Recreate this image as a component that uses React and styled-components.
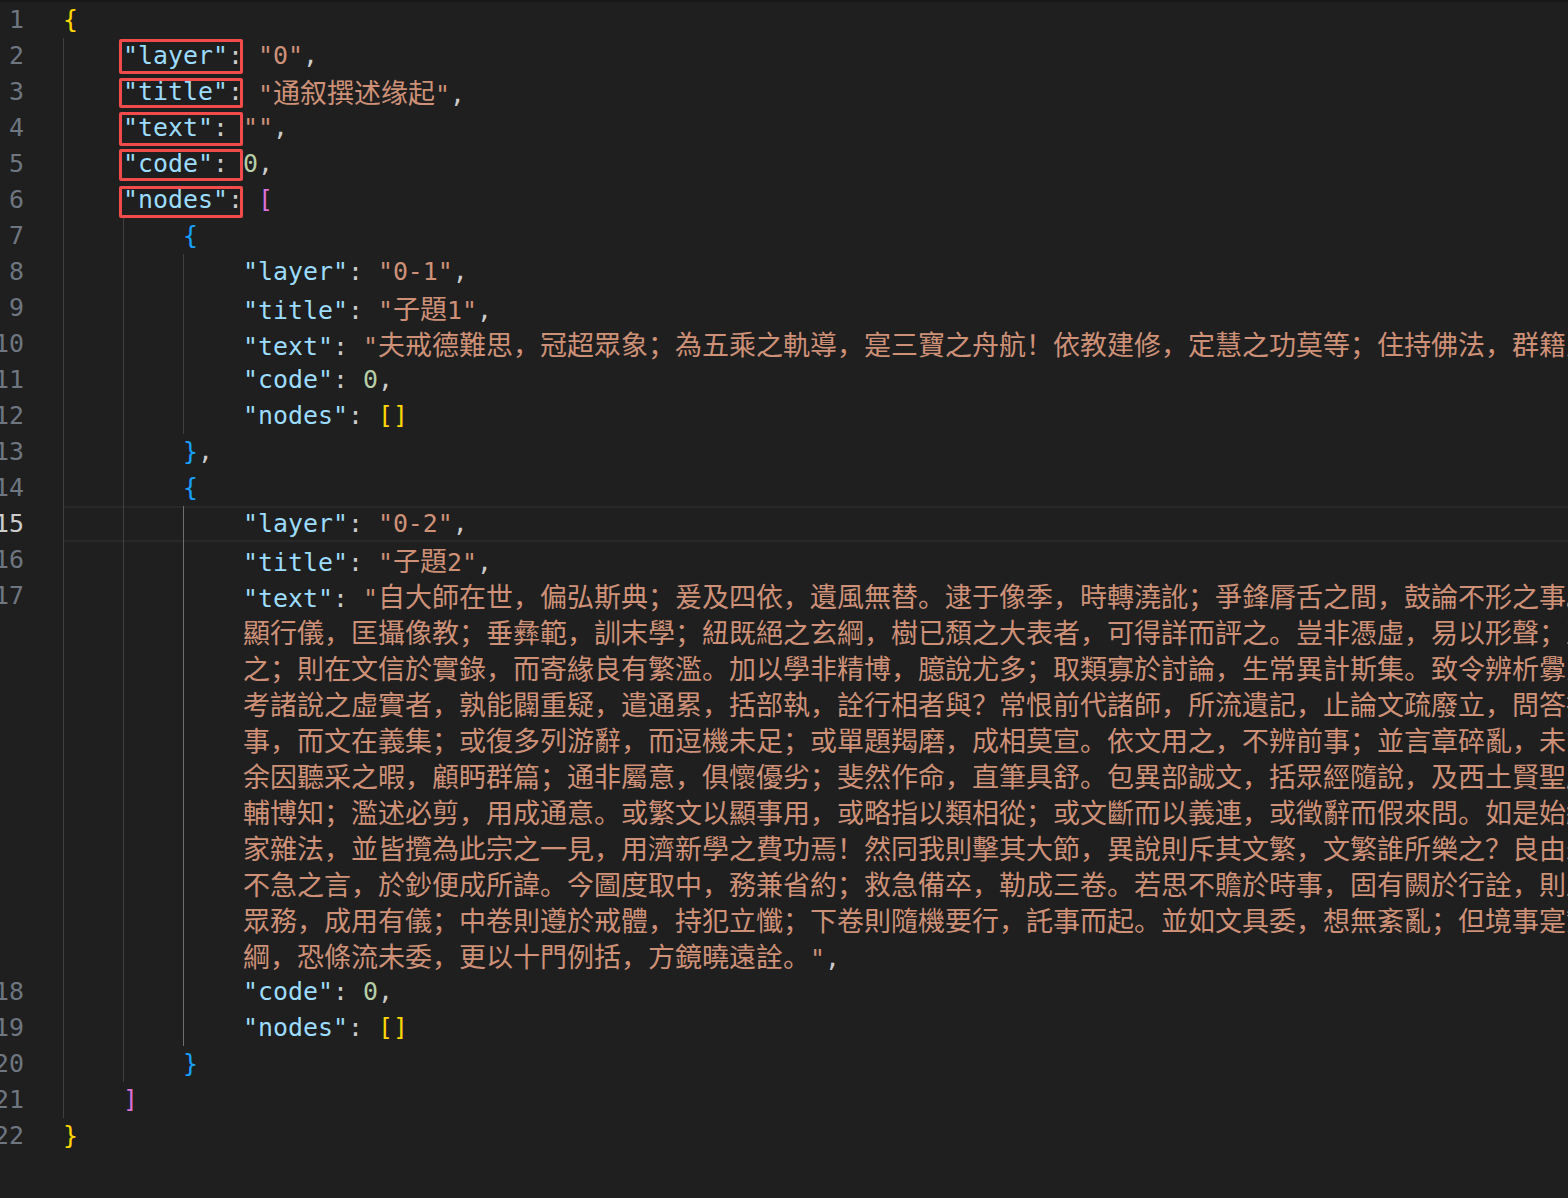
import React from "react";
import styled, { createGlobalStyle } from "styled-components";

const GlobalStyle = createGlobalStyle`
  html, body {
    margin: 0;
    padding: 0;
    background: #1f1f1f;
    overflow: hidden;
  }
`;

const MONO = `"DejaVu Sans Mono", "Liberation Mono", monospace`;

const Editor = styled.div`
  width: 1568px;
  height: 1198px;
  box-sizing: border-box;
  border-top: 2px solid #181818;
  background: #1f1f1f;
  overflow: hidden;
  font-family: ${MONO};
  font-size: 24.9px;
  line-height: 36px;
  color: #cccccc;
`;

const Row = styled.div`
  display: flex;
  height: 36px;
`;

const LineNo = styled.div`
  flex: none;
  width: 60px;
  margin-left: -36px;
  margin-right: 39px;
  text-align: right;
  white-space: pre;
  color: ${({ $current }) => ($current ? "#cccccc" : "#6e7681")};
`;

const Code = styled.div`
  flex: 1;
  position: relative;
  white-space: pre;
  overflow: hidden;
  box-shadow: ${({ $current }) =>
    $current ? "inset 0 2px #282828, inset 0 -2px #282828" : "none"};
`;

const Indent = styled.span`
  display: inline-block;
  box-sizing: border-box;
  width: 60px;
  height: 36px;
  vertical-align: top;
  border-left: 1px solid ${({ $active }) => ($active ? "#6e6e6e" : "#404040")};
`;

const Key = styled.span`
  color: #9cdcfe;
`;

const StrSpan = styled.span`
  color: #ce9178;
`;

const Num = styled.span`
  color: #b5cea8;
`;

const Punc = styled.span`
  color: #cccccc;
`;

const Bracket = styled.span`
  color: ${({ $c }) => $c};
`;

const Han = styled.span`
  font-family: "Noto Sans CJK SC", "Noto Sans CJK TC", sans-serif;
  font-size: 27px;
`;

const Mark = styled.span`
  position: relative;
  display: inline-block;
  height: 36px;
  vertical-align: top;
  &::after {
    content: "";
    position: absolute;
    left: -4px;
    width: 124px;
    top: ${({ $t }) => $t}px;
    bottom: ${({ $b }) => $b}px;
    border: 3px solid #f24b4b;
    border-radius: 2px;
    box-sizing: border-box;
    pointer-events: none;
  }
`;

const GOLD = "#ffd700";
const ORCHID = "#da70d6";
const BLUE = "#179fff";

const HAN = /([\u2E80-\u9FFF\uF900-\uFAFF\uFF00-\uFFEF\u3000-\u303F]+)/;

const withHan = (text) =>
  text.split(HAN).map((s, i) => (i % 2 ? <Han key={i}>{s}</Han> : s));

const Str = ({ children }) => <StrSpan>{withHan(children)}</StrSpan>;

// indent levels; active = level index that is highlighted
const Guides = ({ n, active }) =>
  Array.from({ length: n }, (_, i) => <Indent key={i} $active={i === active} />);

const Line = ({ n, indent = 0, active = -1, current, children }) => (
  <Row>
    <LineNo $current={current}>{n || ""}</LineNo>
    <Code $current={current}>
      <Guides n={indent} active={active} />
      {children}
    </Code>
  </Row>
);

const wrapped = [
  "顯行儀，匡攝像教；垂彝範，訓末學；紐既絕之玄綱，樹已頹之大表者，可得詳而評之。豈非憑虛，易以形聲；至",
  "之；則在文信於實錄，而寄緣良有繁濫。加以學非精博，臆說尤多；取類寡於討論，生常異計斯集。致令辨析釁累",
  "考諸說之虛實者，孰能闢重疑，遣通累，括部執，詮行相者與？常恨前代諸師，所流遺記，止論文疏廢立，問答抄",
  "事，而文在義集；或復多列游辭，而逗機未足；或單題羯磨，成相莫宣。依文用之，不辨前事；並言章碎亂，未能",
  "余因聽采之暇，顧眄群篇；通非屬意，俱懷優劣；斐然作命，直筆具舒。包異部誠文，括眾經隨說，及西土賢聖所",
  "輔博知；濫述必剪，用成通意。或繁文以顯事用，或略指以類相從；或文斷而以義連，或徵辭而假來問。如是始終",
  "家雜法，並皆攬為此宗之一見，用濟新學之費功焉！然同我則擊其大節，異說則斥其文繁，文繁誰所樂之？良由未",
  "不急之言，於鈔便成所諱。今圖度取中，務兼省約；救急備卒，勒成三卷。若思不贍於時事，固有闕於行詮，則上",
  "眾務，成用有儀；中卷則遵於戒體，持犯立懺；下卷則隨機要行，託事而起。並如文具委，想無紊亂；但境事寔繁",
];

const App = () => (
  <>
    <GlobalStyle />
    <Editor>
      <Line n={1}>
        <Bracket $c={GOLD}>{"{"}</Bracket>
      </Line>
      <Line n={2} indent={1}>
        <Mark $t={1} $b={0}>
          <Key>"layer"</Key>
          <Punc>:</Punc>
        </Mark>{" "}
        <Str>"0"</Str>
        <Punc>,</Punc>
      </Line>
      <Line n={3} indent={1}>
        <Mark $t={4} $b={2}>
          <Key>"title"</Key>
          <Punc>:</Punc>
        </Mark>{" "}
        <Str>"通叙撰述缘起"</Str>
        <Punc>,</Punc>
      </Line>
      <Line n={4} indent={1}>
        <Mark $t={2} $b={0}>
          <Key>"text"</Key>
          <Punc>: </Punc>
        </Mark>
        <Str>""</Str>
        <Punc>,</Punc>
      </Line>
      <Line n={5} indent={1}>
        <Mark $t={3} $b={1}>
          <Key>"code"</Key>
          <Punc>: </Punc>
        </Mark>
        <Num>0</Num>
        <Punc>,</Punc>
      </Line>
      <Line n={6} indent={1}>
        <Mark $t={4} $b={0}>
          <Key>"nodes"</Key>
          <Punc>:</Punc>
        </Mark>{" "}
        <Bracket $c={ORCHID}>[</Bracket>
      </Line>
      <Line n={7} indent={2}>
        <Bracket $c={BLUE}>{"{"}</Bracket>
      </Line>
      <Line n={8} indent={3}>
        <Key>"layer"</Key>
        <Punc>: </Punc>
        <Str>"0-1"</Str>
        <Punc>,</Punc>
      </Line>
      <Line n={9} indent={3}>
        <Key>"title"</Key>
        <Punc>: </Punc>
        <Str>"子題1"</Str>
        <Punc>,</Punc>
      </Line>
      <Line n={10} indent={3}>
        <Key>"text"</Key>
        <Punc>: </Punc>
        <Str>"夫戒德難思，冠超眾象；為五乘之軌導，寔三寶之舟航！依教建修，定慧之功莫等；住持佛法，群籍之所宗"</Str>
      </Line>
      <Line n={11} indent={3}>
        <Key>"code"</Key>
        <Punc>: </Punc>
        <Num>0</Num>
        <Punc>,</Punc>
      </Line>
      <Line n={12} indent={3}>
        <Key>"nodes"</Key>
        <Punc>: </Punc>
        <Bracket $c={GOLD}>[]</Bracket>
      </Line>
      <Line n={13} indent={2}>
        <Bracket $c={BLUE}>{"}"}</Bracket>
        <Punc>,</Punc>
      </Line>
      <Line n={14} indent={2}>
        <Bracket $c={BLUE}>{"{"}</Bracket>
      </Line>
      <Line n={15} indent={3} active={2} current>
        <Key>"layer"</Key>
        <Punc>: </Punc>
        <Str>"0-2"</Str>
        <Punc>,</Punc>
      </Line>
      <Line n={16} indent={3} active={2}>
        <Key>"title"</Key>
        <Punc>: </Punc>
        <Str>"子題2"</Str>
        <Punc>,</Punc>
      </Line>
      <Line n={17} indent={3} active={2}>
        <Key>"text"</Key>
        <Punc>: </Punc>
        <Str>"自大師在世，偏弘斯典；爰及四依，遺風無替。逮于像季，時轉澆訛；爭鋒脣舌之間，鼓論不形之事。</Str>
      </Line>
      {wrapped.map((t, i) => (
        <Line key={i} indent={3} active={2}>
          <Str>{t}</Str>
        </Line>
      ))}
      <Line indent={3} active={2}>
        <Str>綱，恐條流未委，更以十門例括，方鏡曉遠詮。"</Str>
        <Punc>,</Punc>
      </Line>
      <Line n={18} indent={3} active={2}>
        <Key>"code"</Key>
        <Punc>: </Punc>
        <Num>0</Num>
        <Punc>,</Punc>
      </Line>
      <Line n={19} indent={3} active={2}>
        <Key>"nodes"</Key>
        <Punc>: </Punc>
        <Bracket $c={GOLD}>[]</Bracket>
      </Line>
      <Line n={20} indent={2}>
        <Bracket $c={BLUE}>{"}"}</Bracket>
      </Line>
      <Line n={21} indent={1}>
        <Bracket $c={ORCHID}>]</Bracket>
      </Line>
      <Line n={22}>
        <Bracket $c={GOLD}>{"}"}</Bracket>
      </Line>
    </Editor>
  </>
);

export default App;
